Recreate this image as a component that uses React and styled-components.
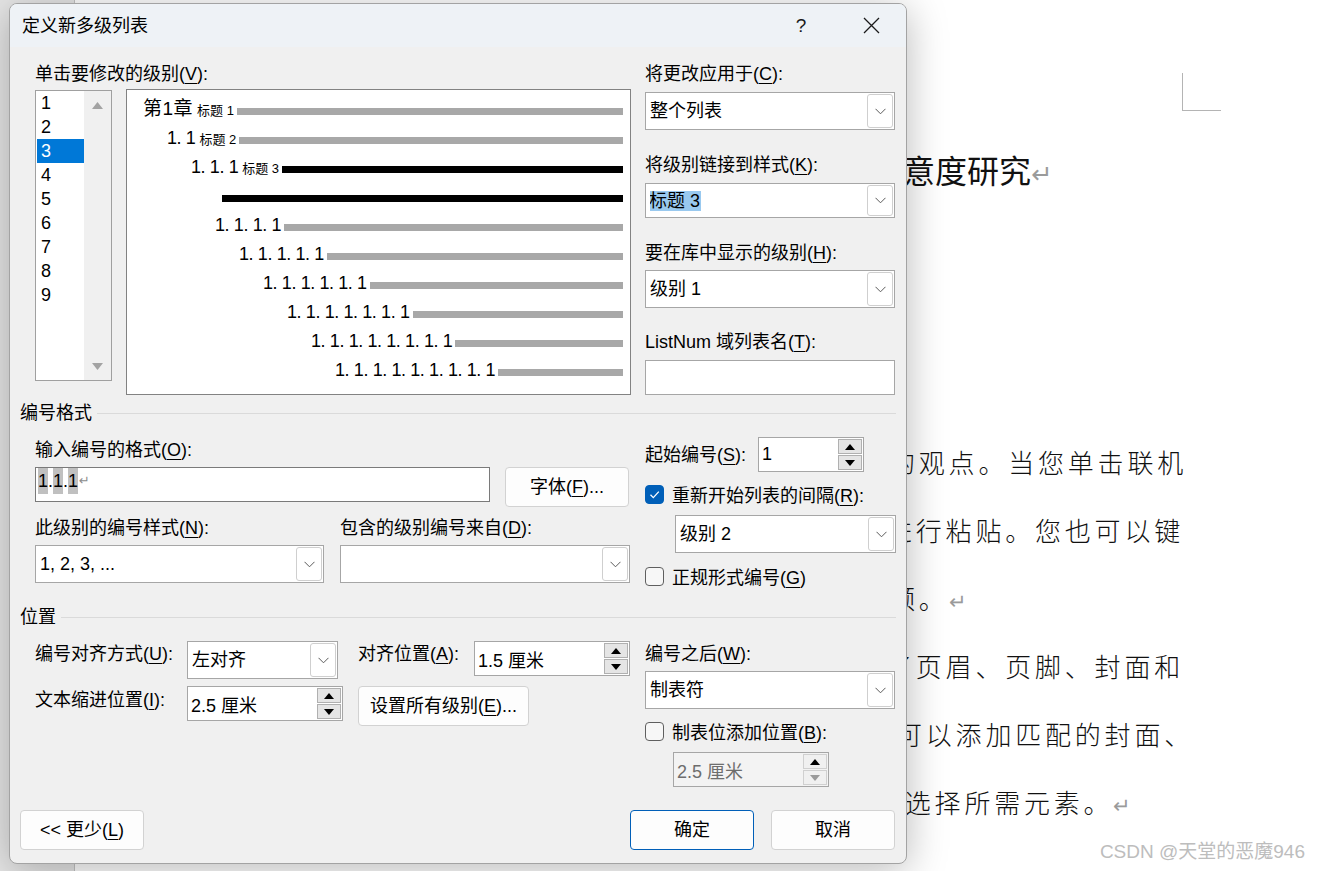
import React from "react";
import styled, { createGlobalStyle } from "styled-components";

const GlobalStyle = createGlobalStyle`
  html, body { margin: 0; padding: 0; background: #fff; }
  body { font-family: "Liberation Sans", "Noto Sans CJK SC", sans-serif; }
  *, *::before, *::after { box-sizing: border-box; }
`;

/* ---------- document behind the dialog ---------- */

const Screen = styled.div`
  position: relative;
  width: 1321px;
  height: 871px;
  overflow: hidden;
  display: flex;
  background: #fff;
`;

const SidePane = styled.div`
  flex: none;
  width: 75px;
  background: #e6e6e6;
  border-right: 1px solid #c4c4c4;
`;

const Page = styled.div`
  flex: 1;
  display: flex;
  flex-direction: column;
  padding-top: 73px;
  font-family: "Noto Sans CJK SC", sans-serif;
  color: #111;
`;

const CornerMark = styled.div`
  margin-left: 1107px;
  width: 39px;
  height: 38px;
  border-left: 1px solid #b4b4b4;
  border-bottom: 1px solid #b4b4b4;
`;

const Heading = styled.div`
  margin: 38px 0 0 796px;
  font-size: 32px;
  line-height: 40px;
  white-space: nowrap;
`;

const DocLines = styled.div`
  margin-top: 238px;
`;

const DocLine = styled.div`
  margin-left: ${(p) => p.$x - 76}px;
  height: 68px;
  font-size: 26px;
  font-weight: 300;
  letter-spacing: 3.8px;
  line-height: 60px;
  white-space: nowrap;
  overflow: hidden;
`;

const ReturnMark = styled.span`
  color: #9b9b9b;
  font-family: "DejaVu Sans", sans-serif;
  font-size: 0.8em;
`;

const Watermark = styled.div`
  position: absolute;
  right: 16px;
  top: 839px;
  font-size: 19px;
  line-height: 26px;
  color: #bdbdbd;
  white-space: nowrap;
`;

/* ---------- dialog window ---------- */

const Dialog = styled.div`
  position: absolute;
  left: 9px;
  top: 3px;
  width: 898px;
  height: 861px;
  display: flex;
  flex-direction: column;
  background: #f0f0f0;
  border: 1px solid #a3a3a3;
  border-radius: 8px;
  overflow: hidden;
  box-shadow: 0 6px 40px rgba(0, 0, 0, 0.28);
  font-size: 18px;
  color: #000;
`;

const TitleBar = styled.div`
  flex: none;
  height: 43px;
  display: flex;
  align-items: center;
  padding-left: 12px;
  background: #eef2f6;
`;

const Title = styled.div`
  flex: 1;
  line-height: 24px;
`;

const TitleButton = styled.div`
  width: 70px;
  height: 100%;
  display: flex;
  align-items: center;
  justify-content: center;
  color: #1a1a1a;
  font-size: 19px;
`;

const Body = styled.div`
  flex: 1;
  display: flex;
  flex-direction: column;
  padding: 15px 10px 13px;
`;

const Split = styled.div`
  display: flex;
  gap: 15px;
  align-items: flex-start;
  margin-top: ${(p) => p.$mt || 0}px;
`;

const LeftCol = styled.div`
  flex: none;
  width: 610px;
  padding-left: 15px;
  display: flex;
  flex-direction: column;
`;

const RightCol = styled.div`
  flex: none;
  width: 250px;
  display: flex;
  flex-direction: column;
`;

const Label = styled.div`
  line-height: 24px;
  white-space: nowrap;
  margin-top: ${(p) => p.$mt || 0}px;
`;

const Key = styled.span`
  text-decoration: underline;
  text-underline-offset: 3px;
  text-decoration-thickness: 1px;
`;

const SectionHead = styled.div`
  display: flex;
  align-items: center;
  gap: 5px;
  line-height: 24px;
  margin-top: ${(p) => p.$mt || 0}px;
  &::after {
    content: "";
    flex: 1;
    height: 1px;
    background: #dadada;
  }
`;

/* level list */

const LevelPanel = styled.div`
  display: flex;
  align-items: flex-start;
`;

const LevelList = styled.div`
  flex: none;
  width: 77px;
  height: 291px;
  margin-top: 4px;
  display: flex;
  background: #fff;
  border: 1px solid #a0a0a0;
`;

const LevelItems = styled.div`
  width: 48px;
  padding: 0 0 0 1px;
  display: flex;
  flex-direction: column;
`;

const LevelItem = styled.div`
  height: 24px;
  line-height: 24px;
  padding-left: 4px;
  background: ${(p) => (p.$selected ? "#0078d7" : "transparent")};
  color: ${(p) => (p.$selected ? "#fff" : "#000")};
`;

const ScrollTrack = styled.div`
  width: 27px;
  display: flex;
  flex-direction: column;
  justify-content: space-between;
  align-items: center;
  padding: 11px 0 10px;
  background: #f0f0f0;
`;

/* preview */

const Preview = styled.div`
  flex: none;
  width: 505px;
  height: 306px;
  margin: 3px 0 0 14px;
  padding: 3px 7px 0 0;
  background: #fff;
  border: 1px solid #828282;
`;

const PreviewRow = styled.div`
  height: 29px;
  display: flex;
  align-items: baseline;
  padding: 6px 0 0 ${(p) => p.$indent}px;
  line-height: 20px;
`;

const Num = styled.span`
  font-size: ${(p) => (p.$chapter ? 19 : 18)}px;
  letter-spacing: ${(p) => (p.$chapter ? "0.5px" : "-0.4px")};
  white-space: nowrap;
`;

const Caption = styled.span`
  margin-left: 4px;
  font-size: 13px;
  white-space: nowrap;
`;

const Bar = styled.span`
  flex: 1;
  height: 7px;
  margin-left: ${(p) => (p.$lead ? 0 : 3)}px;
  background: ${(p) => (p.$dark ? "#000" : "#a8a8a8")};
`;

/* controls */

const Combo = styled.div`
  flex: none;
  width: ${(p) => (p.$w ? `${p.$w}px` : "100%")};
  height: ${(p) => p.$h || 38}px;
  margin-top: ${(p) => p.$mt || 0}px;
  margin-left: ${(p) => p.$ml || 0}px;
  display: flex;
  align-items: center;
  padding: 1px 1px 1px 4px;
  background: #fff;
  border: 1px solid #a6a6a6;
`;

const ComboText = styled.div`
  flex: 1;
  line-height: 24px;
  white-space: nowrap;
  overflow: hidden;
`;

const Selected = styled.span`
  margin-left: -2px;
  padding: 0 1px;
  background: #99c9ef;
`;

const DropButton = styled.div`
  flex: none;
  width: 26px;
  align-self: stretch;
  display: flex;
  align-items: center;
  justify-content: center;
  background: #fff;
  border: 1px solid #cfcfcf;
  border-radius: 3px;
`;

const TextBox = styled.div`
  flex: none;
  width: ${(p) => (p.$w ? `${p.$w}px` : "100%")};
  height: 35px;
  margin-top: ${(p) => p.$mt || 0}px;
  display: flex;
  align-items: flex-start;
  padding-left: 2px;
  background: #fff;
  border: 1px solid ${(p) => (p.$dark ? "#7a7a7a" : "#a6a6a6")};
  line-height: 26px;
`;

const FieldCode = styled.span`
  background: #c0c0c0;
`;

const FormatMark = styled.span`
  color: #8c8c8c;
  font-family: "DejaVu Sans", sans-serif;
  font-size: 13px;
  margin-left: 1px;
`;

const Spin = styled.div`
  flex: none;
  width: ${(p) => p.$w}px;
  height: 35px;
  margin-top: ${(p) => p.$mt || 0}px;
  margin-left: ${(p) => p.$ml || 0}px;
  display: flex;
  padding: 1px;
  background: ${(p) => (p.$disabled ? "#f3f3f3" : "#fff")};
  border: 1px solid #a6a6a6;
  color: ${(p) => (p.$disabled ? "#6d6d6d" : "#000")};
`;

const SpinText = styled.div`
  flex: 1;
  display: flex;
  align-items: center;
  padding-left: 2px;
  white-space: nowrap;
`;

const SpinButtons = styled.div`
  flex: none;
  width: 24px;
  display: flex;
  flex-direction: column;
`;

const SpinButton = styled.div`
  flex: 1;
  display: flex;
  align-items: center;
  justify-content: center;
  background: ${(p) => (p.$disabled ? "#f0f0f0" : "#e5e5e5")};
  border: 1px solid ${(p) => (p.$disabled ? "#d0d0d0" : "#b0b0b0")};
  & + & {
    margin-top: 1px;
  }
`;

const Button = styled.button`
  flex: none;
  width: ${(p) => p.$w}px;
  height: 40px;
  padding: 0;
  background: #fdfdfd;
  border: 1px solid ${(p) => (p.$primary ? "#005fb8" : "#d2d2d2")};
  border-radius: 4px;
  font: inherit;
  color: #000;
  line-height: 24px;
  white-space: nowrap;
`;

const CheckRow = styled.div`
  height: 24px;
  display: flex;
  align-items: center;
  gap: 8px;
  margin-top: ${(p) => p.$mt || 0}px;
  white-space: nowrap;
`;

const CheckBox = styled.div`
  flex: none;
  width: 19px;
  height: 19px;
  border-radius: 4px;
  display: flex;
  align-items: center;
  justify-content: center;
  background: ${(p) => (p.$checked ? "#005fb8" : "#f7f7f7")};
  border: 1px solid ${(p) => (p.$checked ? "#005fb8" : "#5f5f5f")};
`;

const InlineRow = styled.div`
  display: flex;
  align-items: flex-start;
  gap: ${(p) => p.$gap || 0}px;
  margin-top: ${(p) => p.$mt || 0}px;
`;

const SpinField = styled.div`
  display: flex;
  align-items: center;
`;

const SpinLabel = styled.div`
  flex: none;
  width: 113px;
  line-height: 24px;
  white-space: nowrap;
`;

const PairGrid = styled.div`
  display: grid;
  grid-template-columns: 289px 290px;
  column-gap: 16px;
  row-gap: 5px;
  margin-top: 9px;
`;

const PosGrid = styled.div`
  display: grid;
  grid-template-columns: 152px 171px 116px 156px;
  row-gap: 7px;
  align-items: start;
`;

const PosLabel = styled.div`
  line-height: 24px;
  white-space: nowrap;
  padding-top: ${(p) => p.$pt || 1}px;
`;

const WideCell = styled.div`
  grid-column: 3 / 5;
`;

const Footer = styled.div`
  margin-top: auto;
  display: flex;
  gap: 17px;
  padding-right: 1px;
`;

const Spacer = styled.div`
  flex: 1;
`;

/* ---------- drawings ---------- */

const Chevron = () => (
  <svg width="11" height="7" viewBox="0 0 11 7">
    <path d="M0.5 0.8 L5.5 5.8 L10.5 0.8" fill="none" stroke="#5a5a5a" strokeWidth="1" />
  </svg>
);

const Triangle = ({ down, color = "#000", w = 10, h = 6 }) => (
  <svg width={w} height={h} viewBox={`0 0 ${w} ${h}`}>
    <polygon
      points={down ? `0,0 ${w},0 ${w / 2},${h}` : `0,${h} ${w},${h} ${w / 2},0`}
      fill={color}
    />
  </svg>
);

const CheckMark = () => (
  <svg width="13" height="13" viewBox="0 0 13 13">
    <polyline points="2.5,6.8 5.3,9.6 10.8,3.6" fill="none" stroke="#fff" strokeWidth="1.3" />
  </svg>
);

const CloseIcon = () => (
  <svg width="17" height="17" viewBox="0 0 17 17">
    <path d="M1 1 L16 16 M16 1 L1 16" stroke="#1a1a1a" strokeWidth="1.3" />
  </svg>
);

/* ---------- pieces ---------- */

const ComboBox = ({ children, w, h, mt, ml }) => (
  <Combo $w={w} $h={h} $mt={mt} $ml={ml}>
    <ComboText>{children}</ComboText>
    <DropButton>
      <Chevron />
    </DropButton>
  </Combo>
);

const Spinner = ({ value, w, mt, ml, disabled }) => (
  <Spin $w={w} $mt={mt} $ml={ml} $disabled={disabled}>
    <SpinText>{value}</SpinText>
    <SpinButtons>
      <SpinButton $disabled={disabled}>
        <Triangle />
      </SpinButton>
      <SpinButton $disabled={disabled}>
        <Triangle down color={disabled ? "#9a9a9a" : "#000"} />
      </SpinButton>
    </SpinButtons>
  </Spin>
);

const Check = ({ checked, children, mt }) => (
  <CheckRow $mt={mt}>
    <CheckBox $checked={checked}>{checked && <CheckMark />}</CheckBox>
    <span>{children}</span>
  </CheckRow>
);

const levelNum = (n) => Array(n).fill("1").join(". ");

const previewRows = [
  { indent: 16, num: "第1章", caption: "标题 1", chapter: true },
  { indent: 40, num: levelNum(2), caption: "标题 2" },
  { indent: 64, num: levelNum(3), caption: "标题 3", dark: true },
  { indent: 90, num: "\u00a0", dark: true, lead: true },
  { indent: 88, num: levelNum(4) },
  { indent: 112, num: levelNum(5) },
  { indent: 136, num: levelNum(6) },
  { indent: 160, num: levelNum(7) },
  { indent: 184, num: levelNum(8) },
  { indent: 208, num: levelNum(9) },
];

const docLines = [
  { x: 890, text: "的观点。当您单击联机" },
  { x: 887, text: "进行粘贴。您也可以键" },
  { x: 890, text: "频。", end: true },
  { x: 887, text: "了页眉、页脚、封面和" },
  { x: 897, text: "可以添加匹配的封面、" },
  { x: 876, text: "中选择所需元素。", end: true },
];

export default function App() {
  return (
    <>
      <GlobalStyle />
      <Screen>
        <SidePane />
        <Page>
          <CornerMark />
          <Heading>
            满意度研究<ReturnMark>↵</ReturnMark>
          </Heading>
          <DocLines>
            {docLines.map((l) => (
              <DocLine key={l.text} $x={l.x}>
                {l.text}
                {l.end && <ReturnMark>↵</ReturnMark>}
              </DocLine>
            ))}
          </DocLines>
        </Page>
        <Watermark>CSDN @天堂的恶魔946</Watermark>

        <Dialog>
          <TitleBar>
            <Title>定义新多级列表</Title>
            <TitleButton>?</TitleButton>
            <TitleButton>
              <CloseIcon />
            </TitleButton>
          </TitleBar>

          <Body>
            <Split>
              <LeftCol>
                <Label>
                  单击要修改的级别(<Key>V</Key>):
                </Label>
                <LevelPanel>
                  <LevelList>
                    <LevelItems>
                      {[1, 2, 3, 4, 5, 6, 7, 8, 9].map((n) => (
                        <LevelItem key={n} $selected={n === 3}>
                          {n}
                        </LevelItem>
                      ))}
                    </LevelItems>
                    <ScrollTrack>
                      <Triangle color="#a3a3a3" w={11} h={7} />
                      <Triangle down color="#a3a3a3" w={11} h={7} />
                    </ScrollTrack>
                  </LevelList>
                  <Preview>
                    {previewRows.map((r, i) => (
                      <PreviewRow key={i} $indent={r.indent}>
                        <Num $chapter={r.chapter}>{r.num}</Num>
                        {r.caption && <Caption>{r.caption}</Caption>}
                        <Bar $dark={r.dark} $lead={r.lead} />
                      </PreviewRow>
                    ))}
                  </Preview>
                </LevelPanel>
              </LeftCol>

              <RightCol>
                <Label>
                  将更改应用于(<Key>C</Key>):
                </Label>
                <ComboBox mt={6}>整个列表</ComboBox>
                <Label $mt={23}>
                  将级别链接到样式(<Key>K</Key>):
                </Label>
                <ComboBox mt={6} h={35}>
                  <Selected>标题 3</Selected>
                </ComboBox>
                <Label $mt={23}>
                  要在库中显示的级别(<Key>H</Key>):
                </Label>
                <ComboBox mt={5}>级别 1</ComboBox>
                <Label $mt={22}>
                  ListNum 域列表名(<Key>T</Key>):
                </Label>
                <TextBox $mt={6} />
              </RightCol>
            </Split>

            <SectionHead $mt={6}>编号格式</SectionHead>

            <Split $mt={12}>
              <LeftCol>
                <Label $mt={1}>
                  输入编号的格式(<Key>O</Key>):
                </Label>
                <InlineRow $mt={5} $gap={15}>
                  <TextBox $w={455} $dark>
                    <FieldCode>1</FieldCode>.<FieldCode>1</FieldCode>.<FieldCode>1</FieldCode>
                    <FormatMark>↵</FormatMark>
                  </TextBox>
                  <Button $w={124}>
                    字体(<Key>F</Key>)...
                  </Button>
                </InlineRow>
                <PairGrid>
                  <Label>
                    此级别的编号样式(<Key>N</Key>):
                  </Label>
                  <Label>
                    包含的级别编号来自(<Key>D</Key>):
                  </Label>
                  <ComboBox>1, 2, 3, ...</ComboBox>
                  <ComboBox />
                </PairGrid>
              </LeftCol>

              <RightCol>
                <SpinField>
                  <SpinLabel>
                    起始编号(<Key>S</Key>):
                  </SpinLabel>
                  <Spinner value="1" w={106} />
                </SpinField>
                <Check checked mt={10}>
                  重新开始列表的间隔(<Key>R</Key>):
                </Check>
                <ComboBox mt={9} ml={30} w={221}>
                  级别 2
                </ComboBox>
                <Check mt={11}>
                  正规形式编号(<Key>G</Key>)
                </Check>
              </RightCol>
            </Split>

            <SectionHead $mt={17}>位置</SectionHead>

            <Split $mt={12}>
              <LeftCol>
                <PosGrid>
                  <PosLabel>
                    编号对齐方式(<Key>U</Key>):
                  </PosLabel>
                  <ComboBox w={151}>左对齐</ComboBox>
                  <PosLabel>
                    对齐位置(<Key>A</Key>):
                  </PosLabel>
                  <Spinner value="1.5 厘米" w={156} />
                  <PosLabel $pt={2}>
                    文本缩进位置(<Key>I</Key>):
                  </PosLabel>
                  <Spinner value="2.5 厘米" w={156} />
                  <WideCell>
                    <Button $w={171}>
                      设置所有级别(<Key>E</Key>)...
                    </Button>
                  </WideCell>
                </PosGrid>
              </LeftCol>

              <RightCol>
                <Label $mt={1}>
                  编号之后(<Key>W</Key>):
                </Label>
                <ComboBox mt={5}>制表符</ComboBox>
                <Check mt={10}>
                  制表位添加位置(<Key>B</Key>):
                </Check>
                <Spinner value="2.5 厘米" w={156} mt={9} ml={28} disabled />
              </RightCol>
            </Split>

            <Footer>
              <Button $w={124}>
                {"<< 更少("}
                <Key>L</Key>)
              </Button>
              <Spacer />
              <Button $w={124} $primary>
                确定
              </Button>
              <Button $w={124}>取消</Button>
            </Footer>
          </Body>
        </Dialog>
      </Screen>
    </>
  );
}
